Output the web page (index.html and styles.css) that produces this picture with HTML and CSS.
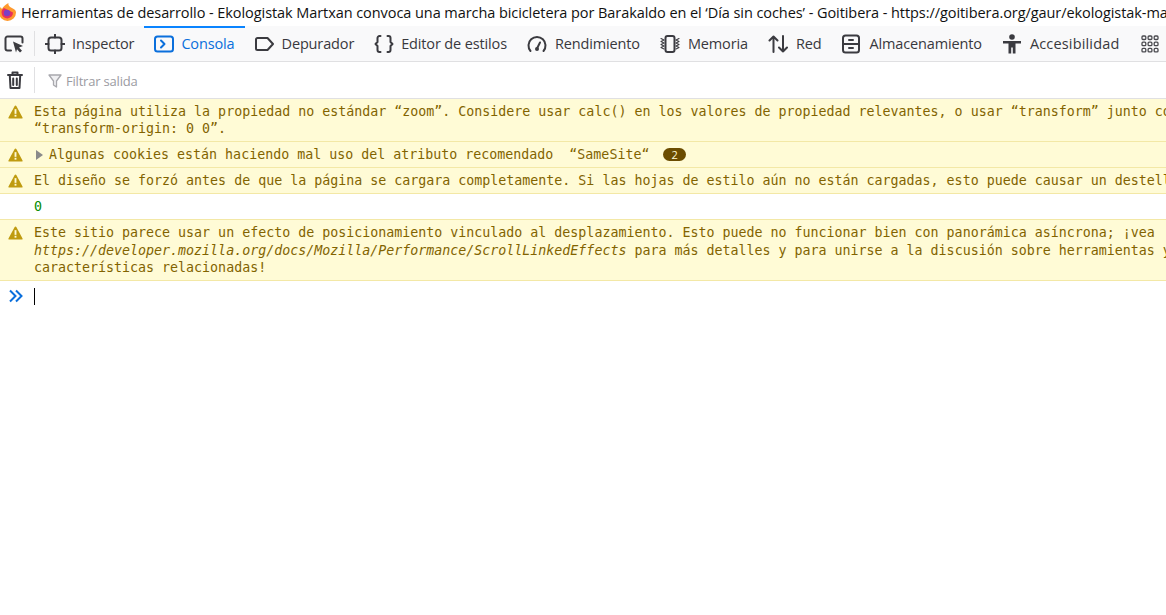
FILE: index.html
```html
<!DOCTYPE html>
<html lang="es">
<head>
<meta charset="utf-8">
<title>Herramientas de desarrollo</title>
<link rel="stylesheet" href="styles.css">
</head>
<body>
<header class="titlebar">
  <svg class="fx" viewBox="0 0 17 18"><path d="M8.500 18A8.500 8.500 0 0 1 0 9.500C0 7 1 5 2 4c0 1 .5 1.500 1 2C4 3.500 6.500 1.500 9.500 0 9 2 10 3 12 4.500c2.500 1.500 5 2 5 5A8.500 8.500 0 0 1 8.500 18z" fill="#ff9a2e"/><path d="M8.500 15.500a6 6 0 0 1-6-6c0-2 1-3.500 2.500-4.500L9 7l5 2.500a6 6 0 0 1-5.500 6z" fill="#e8305c"/><circle cx="8" cy="10" r="3.200" fill="#7b3fc4"/></svg>
  <span class="titletext">Herramientas de desarrollo - Ekologistak Martxan convoca una marcha bicicletera por Barakaldo en el ‘Día sin coches’ - Goitibera - https://goitibera.org/gaur/ekologistak-martxan-convoca-una-marcha-bicicletera</span>
</header>
<nav class="toolbar">
  <button class="pick">
    <svg class="ico" viewBox="0 0 20 20"><path d="M7 16.500H3.500a2 2 0 0 1-2-2v-10a2 2 0 0 1 2-2h13a2 2 0 0 1 2 2v4" class="ln"/><path d="M9 7.500l10 4.500-4 1.500 3 3.300-2 1.700-3-3.300-1 3.300z" class="fl"/></svg>
  </button>
  <div class="tab"><svg class="ico" viewBox="0 0 20 20"><rect x="3.500" y="3.500" width="13" height="13" rx="2.500" class="ln"/><path d="M10 0.500V3.500M10 16.500v3M0.500 10H3.500M16.500 10h3" class="ln"/></svg><span>Inspector</span></div>
  <div class="tab active"><svg class="ico" viewBox="0 0 20 20"><rect x="1" y="2.500" width="18" height="15" rx="2.500" class="ln"/><path d="M7 6.500l3.500 3.500L7 13.500" class="ln"/></svg><span>Consola</span></div>
  <div class="tab"><svg class="ico" viewBox="0 0 20 20"><path d="M2.500 4h10l5.500 6-5.500 6h-10a1.500 1.500 0 0 1-1.500-1.500v-9A1.500 1.500 0 0 1 2.500 4z" class="ln"/></svg><span>Depurador</span></div>
  <div class="tab"><svg class="ico" viewBox="0 0 20 20"><path d="M6.500 2H5.500A2 2 0 0 0 3.500 4v4L1.500 10l2 2v4a2 2 0 0 0 2 2h1M13.500 2h1a2 2 0 0 1 2 2v4l2 2-2 2v4a2 2 0 0 1-2 2h-1" class="ln"/></svg><span>Editor de estilos</span></div>
  <div class="tab wide-gap"><svg class="ico" viewBox="0 0 20 20"><path d="M3.500 17A8.500 8.500 0 1 1 16.500 17" class="ln"/><path d="M10 14.500l3-6" class="ln"/><circle cx="10" cy="15" r="2" class="fl"/></svg><span>Rendimiento</span></div>
  <div class="tab wide-gap"><svg class="ico" viewBox="0 0 20 20"><rect x="5.500" y="2" width="9" height="16" rx="2" class="ln"/><path d="M1 4.500l3 1.500-3 1.500 3 1.500-3 1.500 3 1.500-3 1.500 3 1.500M19 4.500l-3 1.500 3 1.500-3 1.500 3 1.500-3 1.500 3 1.500-3 1.500" class="thin"/></svg><span>Memoria</span></div>
  <div class="tab wide-gap"><svg class="ico" viewBox="0 0 20 20"><path d="M5.500 18V2.500M1.500 6.500L5.500 2.500l4 4M15 2v15.500M11 13.500l4 4 4-4" class="ln"/></svg><span>Red</span></div>
  <div class="tab wide-gap"><svg class="ico" viewBox="0 0 20 20"><rect x="2" y="1.500" width="16" height="17" rx="2.500" class="ln"/><path d="M2 10h16M8 6h4M8 14h4" class="ln"/></svg><span>Almacenamiento</span></div>
  <div class="tab wide-gap"><svg class="ico" viewBox="0 0 20 20"><circle cx="10" cy="3" r="2.800" class="fl"/><path d="M1 7h18v2.500h-5.500V19.500h-2.700v-6h-1.600v6H6.500V9.500H1z" class="fl"/></svg><span class="spaced">Accesibilidad</span></div>
  <svg class="grid" viewBox="0 0 18 18"><g class="cells"><rect x="1" y="1" width="3.800" height="3.500" rx="1"/><rect x="7.100" y="1" width="3.800" height="3.500" rx="1"/><rect x="13.200" y="1" width="3.800" height="3.500" rx="1"/><rect x="1" y="7.200" width="3.800" height="3.500" rx="1"/><rect x="7.100" y="7.200" width="3.800" height="3.500" rx="1"/><rect x="13.200" y="7.200" width="3.800" height="3.500" rx="1"/><rect x="1" y="13.400" width="3.800" height="3.500" rx="1"/><rect x="7.100" y="13.400" width="3.800" height="3.500" rx="1"/><rect x="13.200" y="13.400" width="3.800" height="3.500" rx="1"/></g></svg>
</nav>
<div class="filterbar">
  <button class="pick">
    <svg class="ico" viewBox="0 0 20 20"><path d="M3 5h14M7.500 4.500V2.500h5v2M4.800 5.500l.7 12.500h9l.7-12.500M8.200 8.500v6.500M11.800 8.500v6.500" class="ln"/></svg>
  </button>
  <div class="filter">
    <svg class="funnel" viewBox="0 0 14 14"><path d="M1 1h12L8.500 7v6l-3-2V7z"/></svg>
    <span>Filtrar salida</span>
  </div>
</div>
<main class="console">
  <div class="msg warn"><svg class="warnico" viewBox="0 0 16 16"><path d="M8 1.500a1 1 0 0 1 .9.500l6.600 12.300a.8.800 0 0 1-.7 1.200H1.200a.8.800 0 0 1-.7-1.200L7.100 2a1 1 0 0 1 .9-.500z"/><rect x="7" y="5.500" width="2" height="5" class="mark"/><rect x="7" y="11.500" width="2" height="2" class="mark"/></svg><p>Esta página utiliza la propiedad no estándar “zoom”. Considere usar calc() en los valores de propiedad relevantes, o usar “transform” junto con<br>“transform-origin: 0 0”.</p></div>
  <div class="msg warn"><svg class="warnico" viewBox="0 0 16 16"><path d="M8 1.500a1 1 0 0 1 .9.500l6.600 12.300a.8.800 0 0 1-.7 1.200H1.200a.8.800 0 0 1-.7-1.200L7.100 2a1 1 0 0 1 .9-.500z"/><rect x="7" y="5.500" width="2" height="5" class="mark"/><rect x="7" y="11.500" width="2" height="2" class="mark"/></svg><p><i class="arrow"></i>Algunas cookies están haciendo mal uso del atributo recomendado  “SameSite“ <b class="badge">2</b></p></div>
  <div class="msg warn"><svg class="warnico" viewBox="0 0 16 16"><path d="M8 1.500a1 1 0 0 1 .9.500l6.600 12.300a.8.800 0 0 1-.7 1.200H1.200a.8.800 0 0 1-.7-1.200L7.100 2a1 1 0 0 1 .9-.500z"/><rect x="7" y="5.500" width="2" height="5" class="mark"/><rect x="7" y="11.500" width="2" height="2" class="mark"/></svg><p>El diseño se forzó antes de que la página se cargara completamente. Si las hojas de estilo aún no están cargadas, esto puede causar un destello</p></div>
  <div class="msg plain"><p>0</p></div>
  <div class="msg warn"><svg class="warnico" viewBox="0 0 16 16"><path d="M8 1.500a1 1 0 0 1 .9.500l6.600 12.300a.8.800 0 0 1-.7 1.200H1.200a.8.800 0 0 1-.7-1.200L7.100 2a1 1 0 0 1 .9-.500z"/><rect x="7" y="5.500" width="2" height="5" class="mark"/><rect x="7" y="11.500" width="2" height="2" class="mark"/></svg><p>Este sitio parece usar un efecto de posicionamiento vinculado al desplazamiento. Esto puede no funcionar bien con panorámica asíncrona; ¡vea<br><em>https://developer.mozilla.org/docs/Mozilla/Performance/ScrollLinkedEffects</em> para más detalles y para unirse a la discusión sobre herramientas y<br>características relacionadas!</p></div>
  <div class="prompt"><svg class="chev" viewBox="0 0 14 14"><path d="M1 1.500L6.500 7 1 12.500M7 1.500L12.500 7 7 12.500"/></svg><span class="caret"></span></div>
</main>
</body>
</html>
```
FILE: styles.css
```css
* { box-sizing: border-box; }
html, body { margin: 0; height: 100%; overflow: hidden; background: #fff; }
body { font-family: "Open Sans", "Noto Sans", sans-serif; color: #0c0c0d; width: 1166px; }
.titlebar { height: 26px; padding-bottom: 2px; display: flex; align-items: center; white-space: nowrap; overflow: hidden; font-size: 14.5px; letter-spacing: -0.07px; color: #111; }
.fx { width: 17px; height: 18px; margin-left: -1px; margin-right: 5px; flex: none; }
.toolbar { height: 36px; display: flex; align-items: center; background: #f9f9fa; border-bottom: 1px solid #e0e0e2; white-space: nowrap; font-size: 14.5px; letter-spacing: -0.14px; color: #38383d; }
.pick { width: 35px; height: 100%; padding: 0 0 0 4px; display: flex; align-items: center; background: none; border: 0; position: relative; flex: none; }
.pick::after { content: ""; position: absolute; right: 0; top: 5px; bottom: 5px; width: 1px; background: #e0e0e2; }
.ico { width: 20px; height: 20px; flex: none; }
.ln { fill: none; stroke: #3b3b40; stroke-width: 2; stroke-linecap: round; stroke-linejoin: round; }
.thin { fill: none; stroke: #3b3b40; stroke-width: 1.100; stroke-linecap: round; stroke-linejoin: round; }
.fl { fill: #3b3b40; }
.tab { height: 100%; display: flex; align-items: center; gap: 7px; padding: 0 10px; flex: none; }
.wide-gap { gap: 8px; }
.spaced { letter-spacing: 0.17px; }
.tab.active { color: #0a6fdc; box-shadow: inset 0 2px 0 #0a84ff; }
.tab.active .ln { stroke: #0a6fdc; }
.grid { width: 18px; height: 18px; margin-left: 11px; flex: none; }
.cells rect { fill: none; stroke: #4a4a4f; stroke-width: 1.300; }
.filterbar { height: 37px; display: flex; align-items: center; background: #fff; border-bottom: 1px solid #e0e0e2; }
.filterbar .pick { padding-left: 5px; }
.filter { display: flex; align-items: center; gap: 4px; padding-left: 13px; padding-top: 2px; font-size: 13px; letter-spacing: -0.2px; color: #9b9ba2; }
.funnel { width: 14px; height: 14px; }
.funnel path { fill: #f0f0f2; stroke: #a8a8ad; stroke-width: 1.300; stroke-linejoin: round; }
.console { font-family: "DejaVu Sans Mono", "Liberation Mono", monospace; font-size: 13.3px; line-height: 17.33px; white-space: nowrap; }
.msg { display: flex; padding: 4px 0 3.670px 34px; position: relative; }
.msg p { margin: 0; white-space: pre; }
.warn { background: #fffbd6; color: #826300; border-bottom: 1px solid #f3e8a6; }
.warnico { position: absolute; left: 8px; top: 5px; width: 15px; height: 15px; }
.warnico path { fill: #bf9b10; }
.mark { fill: #fffbd6; }
.plain { color: #058b00; border-bottom: 1px solid #f3e8a6; }
.arrow { display: inline-block; width: 0; height: 0; border-left: 7px solid #8a8a8a; border-top: 5px solid transparent; border-bottom: 5px solid transparent; margin: 0 6px 0 2px; vertical-align: -1px; }
.badge { display: inline-block; margin-left: 6px; padding: 0 8px; height: 13px; line-height: 13px; border-radius: 7px; background: #6b4c00; color: #fffbd6; font-family: "Open Sans", sans-serif; font-size: 11px; font-weight: 400; vertical-align: 0; }
em { font-style: italic; }
.prompt { height: 30px; padding-top: 1px; display: flex; align-items: center; padding-left: 9px; }
.chev { width: 14px; height: 14px; flex: none; }
.chev path { fill: none; stroke: #0a6fdc; stroke-width: 2; }
.caret { width: 1px; height: 17px; margin-left: 11px; background: #000; }
```
